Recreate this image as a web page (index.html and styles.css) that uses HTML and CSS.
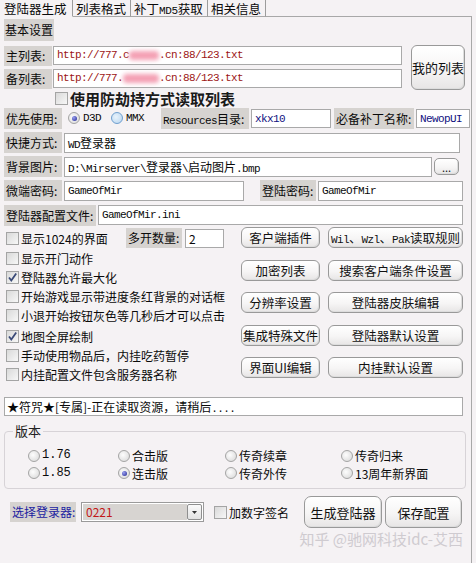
FILE: index.html
```html
<!DOCTYPE html>
<html lang="zh-CN">
<head>
    <meta charset="UTF-8">
    <meta name="viewport" content="width=device-width, initial-scale=1.0">
    <title>登陆器生成</title>
    <link rel="stylesheet" href="styles.css">
</head>
<body>
    <!-- Tab strip -->
    <ul class="tabs">
        <li class="tab active">登陆器生成</li>
        <li class="tab t2">列表格式</li>
        <li class="tab t3">补丁<span class="mono">MD5</span>获取</li>
        <li class="tab t4">相关信息</li>
        <li class="tab-rest"></li>
    </ul>

    <div class="panel">
        <div class="section-title">基本设置</div>

        <!-- Server lists -->
        <div class="lists">
            <div class="list-fields">
                <div class="row">
                    <span class="lbl w-list">主列表:</span>
                    <div class="field mono url w-url">http://777.c<span class="smudge"></span>.cn:88/123.txt</div>
                </div>
                <div class="row">
                    <span class="lbl w-list">备列表:</span>
                    <div class="field mono url w-url">http://777.<span class="smudge wide"></span>.cn:88/123.txt</div>
                </div>
            </div>
            <button class="btn my-list">我的列表</button>
        </div>

        <div class="row bold-check">
            <span class="box"></span>
            <span>使用防劫持方式读取列表</span>
        </div>

        <div class="row prio">
            <span class="lbl w-58">优先使用:</span>
            <span class="radio checked d3d"></span><span class="mono rtext">D3D</span>
            <span class="radio hover mmx"></span><span class="mono rtext">MMX</span>
            <span class="lbl res-lbl"><span class="mono">Resources</span>目录:</span>
            <div class="field mono navy res">xkx10</div>
            <span class="lbl patch-lbl">必备补丁名称:</span>
            <div class="field mono navy patch">NewopUI</div>
        </div>

        <div class="row line">
            <span class="lbl w-58">快捷方式:</span>
            <div class="field mono shortcut">WD<span class="cjk">登录器</span></div>
        </div>

        <div class="row line">
            <span class="lbl w-58">背景图片:</span>
            <div class="field mono bg-img">D:\Mirserver\<span class="cjk">登录器</span>\<span class="cjk">启动图片</span>.bmp</div>
            <button class="btn browse">...</button>
        </div>

        <div class="row line">
            <span class="lbl w-58">微端密码:</span>
            <div class="field mono pass1">GameOfMir</div>
            <span class="lbl pass-lbl">登陆密码:</span>
            <div class="field mono pass2">GameOfMir</div>
        </div>

        <div class="row line cfg">
            <span class="lbl cfg-lbl">登陆器配置文件:</span>
            <div class="field mono cfg-file">GameOfMir.ini</div>
        </div>

        <!-- Options and tool buttons -->
        <div class="options">
            <div class="checks">
                <div class="check-row first">
                    <span class="check"><span class="box"></span>显示1024的界面</span>
                    <span class="lbl count-lbl">多开数量:</span>
                    <div class="field count">2</div>
                </div>
                <div class="check-row"><span class="box"></span>显示开门动作</div>
                <div class="check-row"><span class="box on"><svg viewBox="0 0 11 11"><path d="M2 5.5 L4.3 8.5 L9.2 1.5"/></svg></span>登陆器允许最大化</div>
                <div class="check-row"><span class="box"></span>开始游戏显示带进度条红背景的对话框</div>
                <div class="check-row"><span class="box"></span>小退开始按钮灰色等几秒后才可以点击</div>
                <div class="check-row gap"><span class="box on"><svg viewBox="0 0 11 11"><path d="M2 5.5 L4.3 8.5 L9.2 1.5"/></svg></span>地图全屏绘制</div>
                <div class="check-row"><span class="box"></span>手动使用物品后，内挂吃药暂停</div>
                <div class="check-row"><span class="box"></span>内挂配置文件包含服务器名称</div>
            </div>
            <div class="tools">
                <button class="btn">客户端插件</button>
                <button class="btn"><span class="mono">Wil</span>、<span class="mono">Wzl</span>、<span class="mono">Pak</span>读取规则</button>
                <button class="btn">加密列表</button>
                <button class="btn">搜索客户端条件设置</button>
                <button class="btn">分辨率设置</button>
                <button class="btn">登陆器皮肤编辑</button>
                <button class="btn">集成特殊文件</button>
                <button class="btn">登陆器默认设置</button>
                <button class="btn">界面UI编辑</button>
                <button class="btn">内挂默认设置</button>
            </div>
        </div>

        <div class="status">★符咒★[专属]-正在读取资源，请稍后<span class="mono">....</span></div>

        <fieldset class="group">
            <legend>版本</legend>
            <div class="versions">
                <span class="opt"><span class="radio"></span><span class="mono">1.76</span></span>
                <span class="opt"><span class="radio"></span>合击版</span>
                <span class="opt"><span class="radio"></span>传奇续章</span>
                <span class="opt"><span class="radio"></span>传奇归来</span>
                <span class="opt"><span class="radio"></span><span class="mono">1.85</span></span>
                <span class="opt"><span class="radio checked"></span>连击版</span>
                <span class="opt"><span class="radio"></span>传奇外传</span>
                <span class="opt"><span class="radio"></span>13周年新界面</span>
            </div>
        </fieldset>

        <div class="row bottom">
            <span class="lbl pick-lbl">选择登录器:</span>
            <div class="select">
                <span class="select-value">0221</span>
                <span class="select-arrow"><svg viewBox="0 0 5 3"><path d="M0 0 H5 L2.5 3 Z"/></svg></span>
            </div>
            <span class="check sign"><span class="box"></span>加数字签名</span>
            <button class="btn big make">生成登陆器</button>
            <button class="btn big save">保存配置</button>
        </div>

        <div class="credit">知乎 @驰网科技idc-艾西</div>
    </div>
</body>
</html>
```

FILE: styles.css
```css
* {
    box-sizing: border-box;
    margin: 0;
    padding: 0;
}

body {
    font-family: "Noto Sans CJK SC", "Noto Sans", sans-serif;
    font-size: 12px;
    color: #0a0a0a;
    background-color: #f5f2f4;
    width: 476px;
    height: 563px;
    overflow: hidden;
}

.mono {
    font-family: "Liberation Mono", "Noto Sans CJK SC", monospace;
    font-size: 11px;
    letter-spacing: -0.6px;
}

.mono .cjk {
    font-family: "Noto Sans CJK SC", sans-serif;
    font-size: 12px;
    letter-spacing: 0;
}

/* Tabs */
.tabs {
    list-style: none;
    display: flex;
    width: 472px;
    height: 17px;
}

.tab {
    font-size: 12.5px;
    line-height: 18px;
    height: 17px;
    padding-left: 3px;
    border-right: 1px solid #9c9c9c;
    border-bottom: 1px solid #a8a8a8;
    white-space: nowrap;
}

.tab .mono {
    font-size: 11px;
    letter-spacing: -0.4px;
}

.tab.active {
    width: 73px;
    padding-left: 4px;
    border-bottom-color: transparent;
}

.tab.t2 { width: 58px; }
.tab.t3 { width: 77px; }
.tab.t4 { width: 58px; }

.tab-rest {
    flex: 1;
    border-bottom: 1px solid #a8a8a8;
}

/* Main panel */
.panel {
    width: 472px;
    height: 546px;
    border-right: 1px solid #a8a8a8;
    padding: 2px 0 0 4px;
}

.section-title {
    width: 50px;
    height: 22px;
    line-height: 22px;
    padding-left: 1px;
    background-color: #d6d3d0;
}

.row {
    display: flex;
    align-items: center;
}

.lbl {
    display: inline-block;
    height: 21px;
    line-height: 21px;
    padding-left: 2px;
    background-color: #d6d3d0;
    white-space: nowrap;
}

.field {
    height: 20px;
    line-height: 18px;
    padding-left: 3px;
    background-color: #fff;
    border: 1px solid #a9a9a9;
    white-space: nowrap;
    overflow: hidden;
}

.url { color: #9c1515; }
.navy { color: #101080; }

.smudge {
    display: inline-block;
    width: 30px;
    height: 9px;
    vertical-align: middle;
    background-color: #f4a0b4;
    border-radius: 4px;
    filter: blur(2px);
}

.smudge.wide {
    width: 36px;
}

.btn {
    font: inherit;
    color: #111;
    border: 1px solid #999;
    border-radius: 4px;
    background: linear-gradient(#ffffff, #f6f5f5 55%, #e7e5e5);
    box-shadow: inset -1px -1px 0 #ddd;
    white-space: nowrap;
}

/* Lists */
.lists {
    display: flex;
    align-items: center;
    height: 46px;
    margin-top: 3px;
}

.list-fields {
    display: flex;
    flex-direction: column;
    gap: 3px;
}

.w-list {
    width: 48px;
    height: 20px;
    line-height: 20px;
}

.w-url {
    width: 349px;
    margin-left: 1px;
    height: 19px;
    line-height: 17px;
}

.my-list {
    width: 54px;
    height: 45px;
    margin-left: 9px;
    font-size: 13px;
    border-radius: 6px;
}

/* Checkbox and radio */
.box {
    display: inline-flex;
    align-items: center;
    justify-content: center;
    flex-shrink: 0;
    width: 13px;
    height: 13px;
    border: 1px solid #a4a4a4;
    background: linear-gradient(135deg, #d9d9d9, #f7f7f7);
}

.box svg {
    width: 11px;
    height: 11px;
}

.box path {
    fill: none;
    stroke: #3a4a78;
    stroke-width: 1.8;
}

.radio {
    display: inline-block;
    flex-shrink: 0;
    width: 12px;
    height: 12px;
    border-radius: 50%;
    border: 1px solid #a4a4a4;
    background: radial-gradient(circle at 40% 40%, #fdfdfd, #d6d6d6);
    position: relative;
}

.radio.hover {
    border-color: #6f9fcf;
    background: radial-gradient(circle at 40% 40%, #e8f3fc, #b7d4ef);
}

.radio.checked::after {
    content: "";
    position: absolute;
    left: 2.5px;
    top: 2.5px;
    width: 5px;
    height: 5px;
    border-radius: 50%;
    background: radial-gradient(circle at 35% 35%, #9aa0f0, #1f2490);
}

.bold-check {
    height: 17px;
    padding-left: 51px;
    gap: 2px;
    font-size: 15px;
    font-weight: bold;
    color: #1a1a1a;
}

/* Preferred renderer row */
.prio {
    height: 22px;
}

.w-58 { width: 58px; }

.prio .d3d { margin-left: 6px; }
.prio .rtext { margin-left: 3px; }
.prio .mmx { margin-left: 10px; }

.res-lbl {
    width: 88px;
    margin-left: 17px;
}

.res {
    width: 80px;
    height: 19px;
    margin-left: 2px;
}

.patch-lbl {
    width: 80px;
    margin-left: 3px;
}

.patch {
    width: 54px;
    height: 19px;
    margin-left: 2px;
}

.line {
    height: 21px;
    margin-top: 3px;
}

.line .field { margin-left: 2px; }

.shortcut { width: 396px; }
.bg-img { width: 368px; }

.browse {
    width: 25px;
    height: 17px;
    margin-left: 2px;
    font-size: 11px;
    line-height: 10px;
    border-radius: 5px;
}

.pass1 { width: 180px; }

.pass-lbl {
    width: 56px;
    margin-left: 16px;
}

.pass2 { width: 145px; }

.cfg { height: 22px; }
.cfg-lbl { width: 92px; }
.cfg-file { width: 365px; }

/* Options block */
.options {
    display: flex;
    margin-top: 1px;
}

.checks {
    width: 237px;
}

.check-row,
.check {
    display: flex;
    align-items: center;
    gap: 2px;
    white-space: nowrap;
}

.check-row {
    height: 19px;
    padding-left: 2px;
}

.check-row.first {
    height: 22px;
    padding-left: 0;
}

.check-row.first .check {
    width: 120px;
    padding-left: 2px;
}

.check-row.gap {
    margin-top: 2px;
}

.count-lbl {
    width: 56px;
    height: 20px;
    line-height: 20px;
}

.count {
    width: 39px;
    height: 19px;
    line-height: 17px;
    margin-left: 1px;
    font-size: 12px;
}

.tools {
    display: grid;
    grid-template-columns: 79px 135px;
    grid-auto-rows: 21px;
    column-gap: 8px;
    row-gap: 11.5px;
}

.tools .btn {
    font-size: 12.5px;
    border-radius: 6px;
}

/* Status line */
.status {
    width: 459px;
    height: 19px;
    line-height: 17px;
    margin-top: 13px;
    padding-left: 2px;
    background-color: #fff;
    border: 1px solid #a9a9a9;
    white-space: nowrap;
}

/* Version group */
.group {
    width: 462px;
    margin-top: 8px;
    border: 1px solid #d7d3d7;
    border-radius: 4px;
    padding: 0;
}

.group legend {
    margin-left: 8px;
    padding: 0 2px;
    font-size: 13px;
    line-height: 14px;
    color: #222;
}

.versions {
    display: grid;
    grid-template-columns: 90px 107px 116px auto;
    grid-auto-rows: 17.5px;
    padding: 9px 0 6px 23px;
}

.opt {
    display: flex;
    align-items: center;
    gap: 2px;
    font-size: 12px;
    line-height: 17px;
    white-space: nowrap;
}

.opt .mono {
    font-size: 12px;
    letter-spacing: 0;
}

/* Bottom bar */
.bottom {
    height: 32px;
    margin-top: 7px;
}

.pick-lbl {
    width: 66px;
    height: 20px;
    line-height: 20px;
    margin-left: 6px;
    color: #1c1ca0;
}

.select {
    display: flex;
    align-items: center;
    width: 123px;
    height: 20px;
    margin-left: 5px;
    padding: 1px;
    background-color: #fff;
    border: 1px solid #9a9a9a;
}

.select-value {
    flex: 1;
    height: 100%;
    line-height: 16px;
    padding-left: 3px;
    color: #c21818;
    background-color: #d7d4d1;
}

.select-arrow {
    display: flex;
    align-items: center;
    justify-content: center;
    width: 15px;
    height: 16px;
    border: 1px solid #8f8f8f;
    border-radius: 2px;
    background: linear-gradient(#fafafa, #e2e2e2);
}

.select-arrow svg {
    width: 5px;
    height: 3px;
    fill: #333;
}

.sign {
    margin-left: 10px;
}

.big {
    height: 32px;
    font-size: 13px;
    border-radius: 7px;
}

.make {
    width: 78px;
    margin-left: 15px;
}

.save {
    width: 77px;
    margin-left: 3px;
}

.credit {
    width: 459px;
    margin-top: 2px;
    text-align: right;
    font-size: 15px;
    line-height: 17px;
    color: #cfcbd0;
}
```
